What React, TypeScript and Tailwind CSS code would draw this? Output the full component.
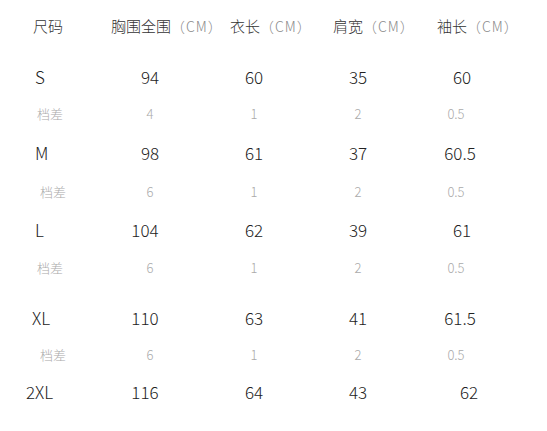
import React from 'react';

type Row = {
  size: string;
  values: string[];
  diff?: string[];
};

// 尺码表数据
const rows: Row[] = [
  { size: 'S', values: ['94', '60', '35', '60'], diff: ['4', '1', '2', '0.5'] },
  { size: 'M', values: ['98', '61', '37', '60.5'], diff: ['6', '1', '2', '0.5'] },
  { size: 'L', values: ['104', '62', '39', '61'], diff: ['6', '1', '2', '0.5'] },
  { size: 'XL', values: ['110', '63', '41', '61.5'], diff: ['6', '1', '2', '0.5'] },
  { size: '2XL', values: ['116', '64', '43', '62'] },
];

const rowMargins = ['mt-[23px]', 'mt-[15px]', 'mt-[14px]', 'mt-[26px]', 'mt-[13px]'];
const diffMargins = ['mt-[13px]', 'mt-[15px]', 'mt-[14px]', 'mt-[13px]'];

function Unit() {
  return <span className="text-[#8a8a8a] text-[14px] tracking-[1px]">（CM）</span>;
}

export default function App() {
  return (
    <div
      className="w-[547px] h-[431px] bg-white overflow-hidden font-light"
      style={{ fontFamily: '"Noto Sans CJK SC", "Noto Sans", sans-serif' }}
    >
      <div className="flex items-center h-[28px] mt-[12px] text-[15px] text-[#333] whitespace-nowrap">
        <div className="w-[111px] pl-[33px]">尺码</div>
        <div className="w-[119px]">
          胸围全围<Unit />
        </div>
        <div className="w-[103px]">
          衣长<Unit />
        </div>
        <div className="w-[104px]">
          肩宽<Unit />
        </div>
        <div>
          袖长<Unit />
        </div>
      </div>

      {rows.map((row, i) => (
        <React.Fragment key={row.size}>
          <div className={`flex items-center h-[28px] text-[17px] text-[#222] ${rowMargins[i]}`}>
            <div className={`w-[98px] ${row.size === '2XL' ? 'pl-[26px]' : row.size === 'XL' ? 'pl-[32px]' : 'pl-[35px]'}`}>
              {row.size}
            </div>
            {row.values.map((v, j) => (
              <div
                key={j}
                className={`w-[104px] text-center ${
                  j === 0 && v.length === 3 ? 'pr-[10px]' : ''
                } ${j === 3 && row.size === '2XL' ? 'pl-[14px]' : ''} ${j === 3 && v.length > 2 ? 'pr-[4px]' : ''}`}
              >
                {v}
              </div>
            ))}
          </div>
          {row.diff && (
            <div className={`flex items-center h-[20px] text-[13px] text-[#aaa] ${diffMargins[i]}`}>
              <div className={`w-[98px] ${i === 0 || i === 2 ? 'pl-[37px]' : 'pl-[40px]'}`}>档差</div>
              {row.diff.map((d, j) => (
                <div key={j} className={`w-[104px] text-center ${j === 3 ? 'pr-[12px]' : ''}`}>
                  {d}
                </div>
              ))}
            </div>
          )}
        </React.Fragment>
      ))}
    </div>
  );
}
